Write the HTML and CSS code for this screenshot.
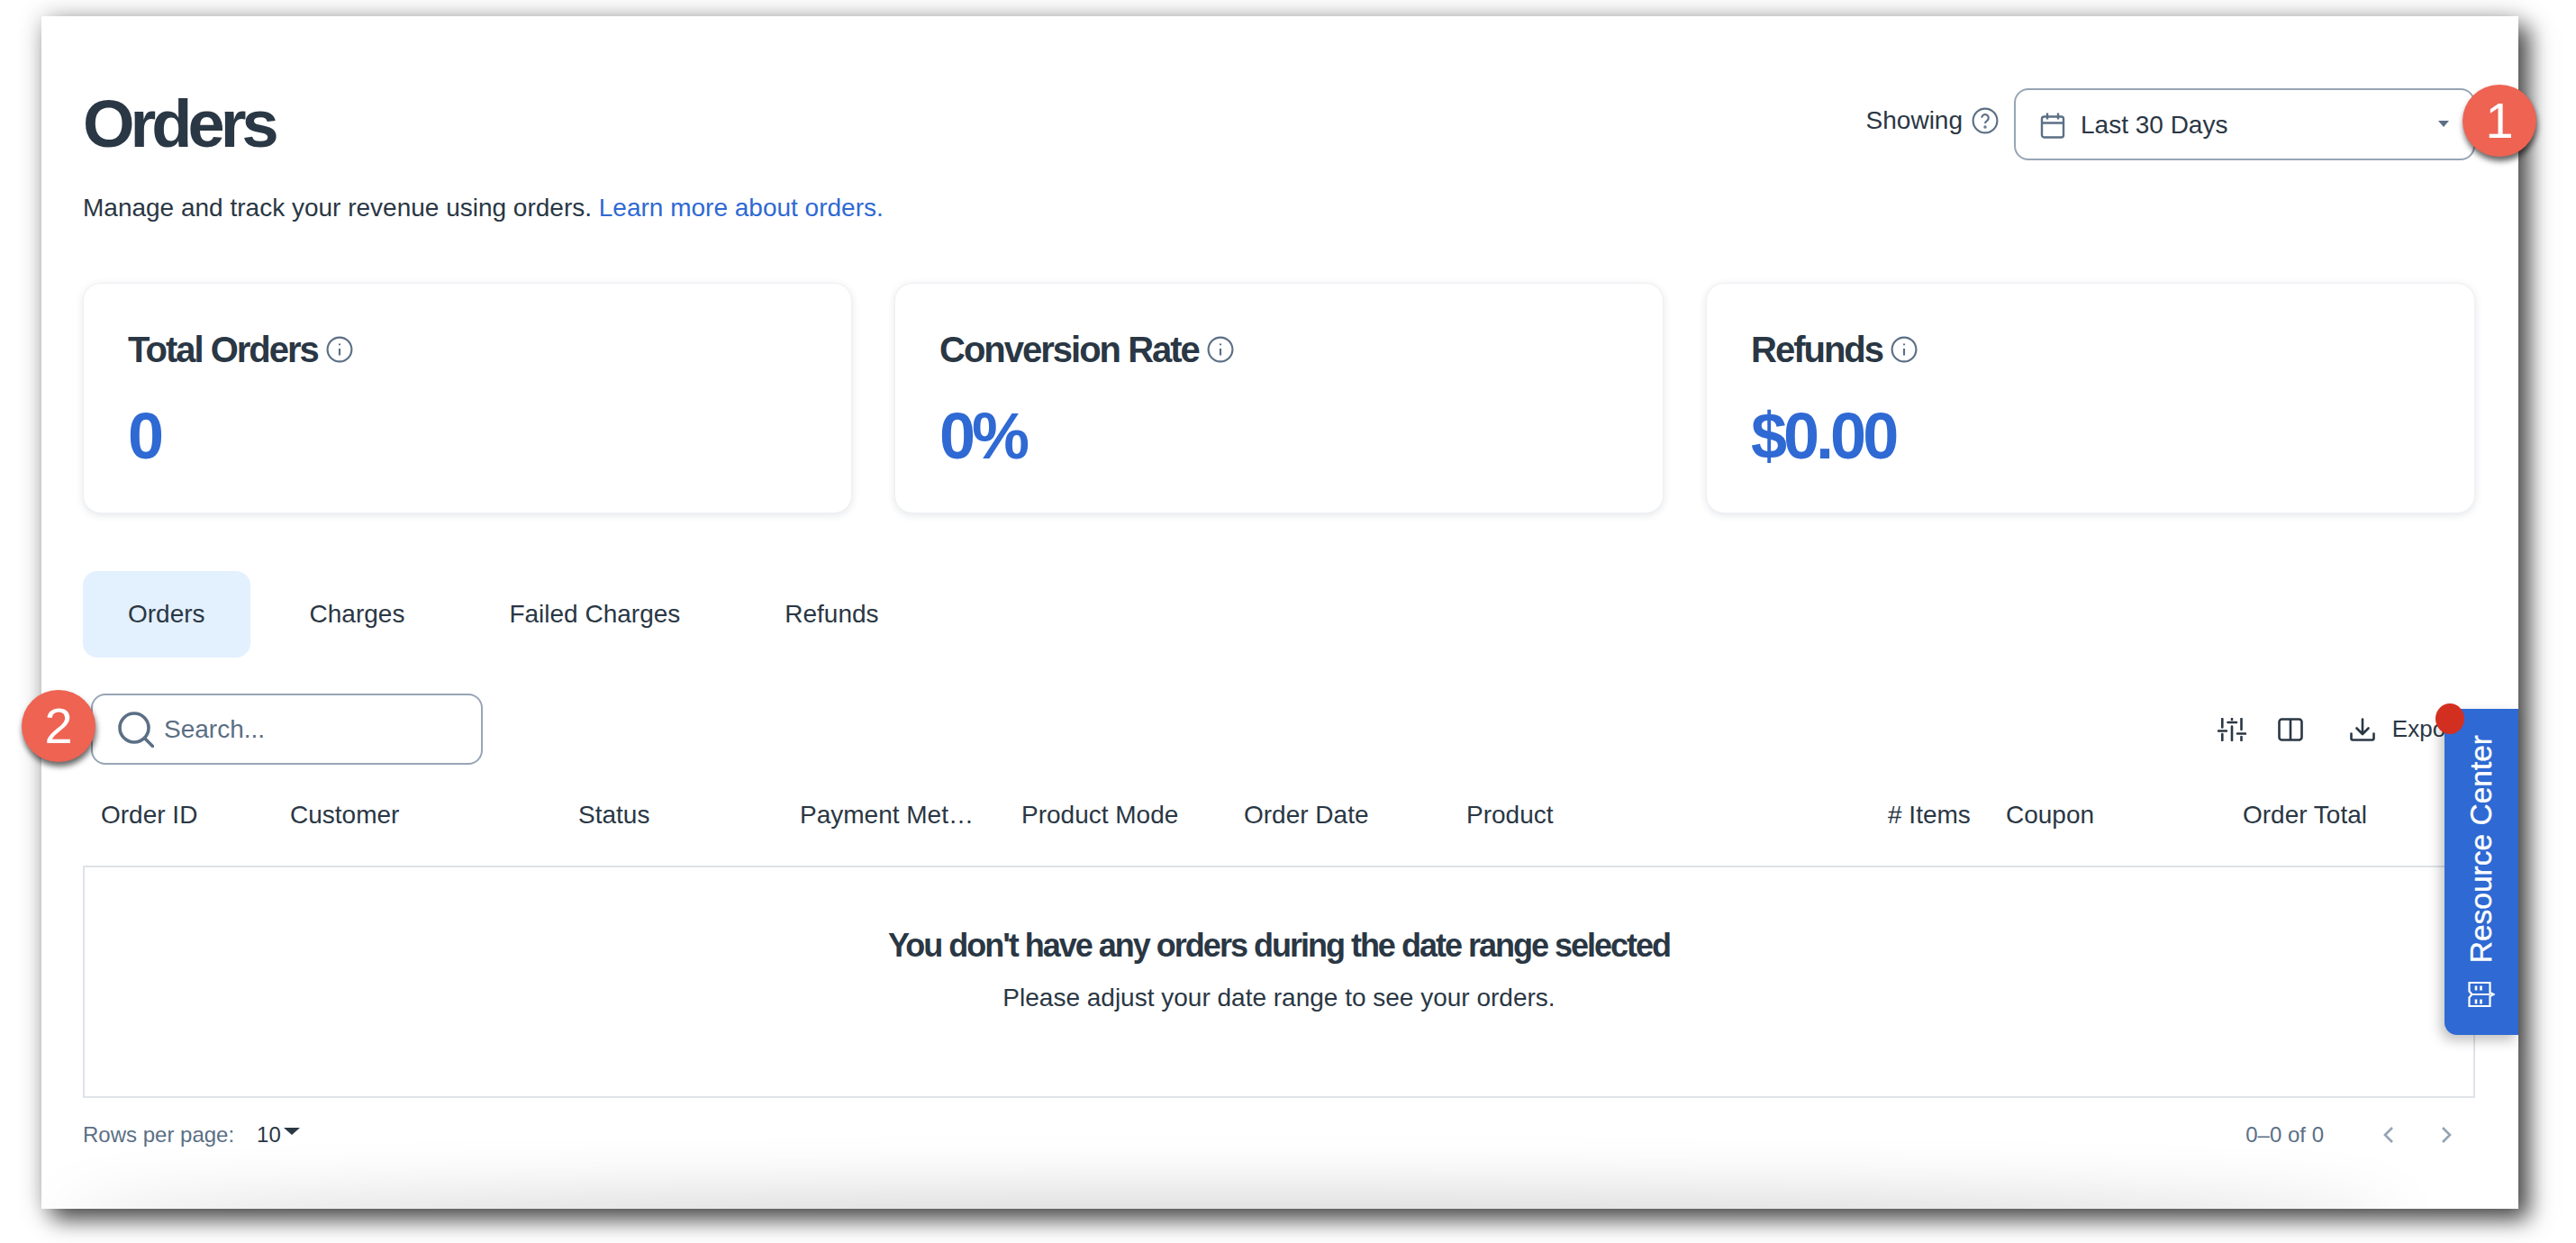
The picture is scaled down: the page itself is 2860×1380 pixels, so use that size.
FILE: index.html
```html
<!DOCTYPE html>
<html lang="en">
<head>
<meta charset="utf-8">
<title>Orders</title>
<link rel="stylesheet" href="styles.css">
</head>
<body>
<main class="window">
  <header class="head">
    <div>
      <h1 class="title">Orders</h1>
      <p class="sub">Manage and track your revenue using orders. <a class="link">Learn more about orders.</a></p>
    </div>
    <div class="range">
      <span class="showing">Showing</span>
      <svg class="help" viewBox="0 0 28 28" fill="none" stroke="#5b6f85" stroke-width="2"><circle cx="14" cy="14" r="12.5"/><path d="M10.5 11a3.5 3.5 0 1 1 5.6 2.8c-1.300 .9-2.100 1.500-2.100 3"/><circle cx="14" cy="20.500" r=".6"/></svg>
      <div class="select">
        <svg class="cal" viewBox="0 0 28 30" fill="none" stroke="#5b6f85" stroke-width="2.400"><rect x="2" y="5" width="24" height="23" rx="2.500"/><path d="M2 12h24M8 1v7M20 1v7"/></svg>
        <span class="select-text">Last 30 Days</span>
        <span class="select-caret"></span>
      </div>
    </div>
  </header>

  <section class="cards">
    <article class="card">
      <h2 class="card-title">Total Orders <svg class="info" viewBox="0 0 28 28" fill="none" stroke="#5b6f85" stroke-width="2"><circle cx="14" cy="14" r="12.500"/><path d="M14 13v7M14 8v1.500"/></svg></h2>
      <div class="card-value">0</div>
    </article>
    <article class="card">
      <h2 class="card-title">Conversion Rate <svg class="info" viewBox="0 0 28 28" fill="none" stroke="#5b6f85" stroke-width="2"><circle cx="14" cy="14" r="12.500"/><path d="M14 13v7M14 8v1.500"/></svg></h2>
      <div class="card-value">0%</div>
    </article>
    <article class="card">
      <h2 class="card-title">Refunds <svg class="info" viewBox="0 0 28 28" fill="none" stroke="#5b6f85" stroke-width="2"><circle cx="14" cy="14" r="12.500"/><path d="M14 13v7M14 8v1.500"/></svg></h2>
      <div class="card-value">$0.00</div>
    </article>
  </section>

  <nav class="tabs">
    <span class="tab tab-active">Orders</span>
    <span class="tab">Charges</span>
    <span class="tab">Failed Charges</span>
    <span class="tab">Refunds</span>
  </nav>

  <div class="toolbar">
    <div class="search">
      <svg class="search-icon" viewBox="0 0 40 40" fill="none" stroke="#5b6f85" stroke-width="3.600"><circle cx="18" cy="18" r="16"/><path d="M29.500 29.500l9 9" stroke-linecap="round"/></svg>
      <span class="search-text">Search...</span>
    </div>
    <div class="actions">
      <svg class="tool" viewBox="0 0 32 26" fill="none" stroke="#2a3744" stroke-width="2.600" stroke-linecap="round"><path d="M5.300 1v9.500M5.300 18v7M16 1v1M16 9.500v15.500M26.500 1v12M26.500 21v4M1 14.500h9M11.500 5h9.500M22 17.500h9"/></svg>
      <svg class="tool tool-col" viewBox="0 0 28 26" fill="none" stroke="#2a3744" stroke-width="2.600"><rect x="1.500" y="1.500" width="25" height="23" rx="3"/><path d="M14 1.500v23"/></svg>
      <svg class="tool tool-dl" viewBox="0 0 28 26" fill="none" stroke="#2a3744" stroke-width="2.600" stroke-linecap="round" stroke-linejoin="round"><path d="M14 1.500v16M7.500 11.500l6.500 6.500 6.500-6.500M1.500 17.500v5.500a1.500 1.500 0 0 0 1.500 1.500h22a1.500 1.500 0 0 0 1.500-1.500v-5.500"/></svg>
      <span class="export">Export</span>
    </div>
  </div>

  <div class="thead">
    <span>Order ID</span>
    <span>Customer</span>
    <span>Status</span>
    <span>Payment Met…</span>
    <span>Product Mode</span>
    <span>Order Date</span>
    <span>Product</span>
    <span># Items</span>
    <span>Coupon</span>
    <span>Order Total</span>
  </div>

  <section class="empty">
    <h3 class="empty-title">You don't have any orders during the date range selected</h3>
    <p class="empty-sub">Please adjust your date range to see your orders.</p>
  </section>

  <footer class="pager">
    <span class="rows">Rows per page:</span>
    <span class="rows-val">10</span>
    <span class="rows-caret"></span>
    <span class="count">0–0 of 0</span>
    <svg class="chev" viewBox="0 0 12 20" fill="none" stroke="#94a3b3" stroke-width="2.600"><path d="M10 2l-8 8 8 8"/></svg>
    <svg class="chev chev-next" viewBox="0 0 12 20" fill="none" stroke="#94a3b3" stroke-width="2.600"><path d="M2 2l8 8-8 8"/></svg>
  </footer>

  <div class="fade"></div>

  <aside class="resource">
    <span class="resource-text">Resource Center</span>
    <svg class="resource-icon" viewBox="0 0 30 30" fill="none" stroke="#fff" stroke-width="2.200"><path d="M1.500 2h23v11l4 2-4 2v11h-23v-9.500l3-3.500-3-3.500zM4.500 15h20"/><path d="M9 5.500v5M14.500 5.500v5M9 20.500v5M14.500 20.500v5" stroke-width="2.600"/></svg>
  </aside>
  <span class="dot"></span>
</main>
<span class="badge badge-one">1</span>
<span class="badge badge-two">2</span>
</body>
</html>
```
FILE: styles.css
```css
* { box-sizing: border-box; }
html, body { margin: 0; padding: 0; }
body {
  width: 2860px;
  height: 1380px;
  overflow: hidden;
  background: #fff;
  padding: 18px 64px 0 46px;
  font-family: "Liberation Sans", Arial, sans-serif;
  font-size: 28px;
  color: #2a3744;
}
.window {
  position: relative;
  width: 2750px;
  height: 1324px;
  padding: 80px 48px 0 46px;
  background: #fff;
  overflow: visible;
  box-shadow: 12px 12px 24px rgba(0,0,0,.68), 0 0 26px rgba(0,0,0,.2);
}
.head { display: flex; justify-content: space-between; align-items: flex-start; }
.title {
  margin: 0;
  font-size: 74px;
  line-height: 80px;
  font-weight: 700;
  letter-spacing: -5px;
}
.sub { margin: 33px 0 0; line-height: 40px; }
.link { color: #2f69d3; }
.range { display: flex; align-items: flex-start; }
.showing { line-height: 40px; margin-top: 16px; }
.help { width: 30px; height: 30px; margin: 21px 17px 0 10px; }
.select {
  display: flex;
  align-items: center;
  width: 512px;
  height: 80px;
  padding: 2px 27px 0;
  border: 2px solid #97a5b5;
  border-radius: 16px;
}
.cal { width: 28px; height: 31px; flex: none; }
.select-text { margin-left: 17px; }
.select-caret {
  margin-left: auto;
  margin-top: -4px;
  border: 6px solid transparent;
  border-top: 7px solid #5b6f85;
  border-bottom: 0;
}
.cards { display: flex; gap: 47px; margin-top: 63px; }
.card {
  flex: 1;
  height: 256px;
  padding: 49px 49px 0;
  background: #fff;
  border: 1px solid #eef0f3;
  border-radius: 20px;
  box-shadow: 0 2px 8px rgba(30,50,70,.12);
}
.card-title {
  margin: 0;
  display: flex;
  align-items: center;
  gap: 10px;
  font-size: 40px;
  line-height: 48px;
  font-weight: 700;
  letter-spacing: -2px;
  white-space: pre;
}
.info { width: 30px; height: 30px; margin-left: -10px; flex: none; }
.card-value {
  margin-top: 32px;
  font-size: 72px;
  line-height: 80px;
  font-weight: 700;
  letter-spacing: -4px;
  color: #2f69d3;
}
.tabs { display: flex; gap: 16px; margin-top: 64px; }
.tab {
  height: 96px;
  padding: 1px 50px 0;
  line-height: 94px;
  border-radius: 16px;
}
.tab-active { background: #e3f0fd; }
.toolbar { display: flex; justify-content: space-between; align-items: center; margin-top: 40px; height: 79px; }
.search {
  display: flex;
  align-items: center;
  width: 435px;
  height: 79px;
  margin-left: 9px;
  padding-left: 28px;
  border: 2px solid #97a5b5;
  border-radius: 16px;
}
.search-icon { width: 40px; height: 40px; flex: none; }
.search-text { margin-left: 11px; color: #5b6f85; }
.actions { display: flex; align-items: center; padding-right: 17px; }
.tool { width: 32px; height: 26px; flex: none; }
.tool-col { width: 28px; margin-left: 35px; }
.tool-dl { width: 28px; margin-left: 52px; }
.export { margin-left: 19px; font-size: 26px; }
.thead {
  display: grid;
  grid-template-columns: 210px 320px 246px 246px 247px 247px 468px 131px 263px 1fr;
  height: 112px;
  padding-left: 20px;
  align-items: center;
  white-space: nowrap;
}
.empty {
  height: 258px;
  padding-top: 63px;
  border: 2px solid #dfe3e8;
  text-align: center;
}
.empty-title {
  margin: 0;
  font-size: 36px;
  line-height: 48px;
  font-weight: 700;
  letter-spacing: -2px;
}
.empty-sub { margin: 14px 0 0; line-height: 40px; }
.pager {
  display: flex;
  align-items: center;
  height: 82px;
  font-size: 24px;
}
.rows { color: #5b6f85; }
.rows-val { margin-left: 25px; }
.rows-caret {
  margin: -8px 0 0 3px;
  border: 9px solid transparent;
  border-top: 8px solid #2a3744;
  border-bottom: 0;
}
.count { margin-left: auto; color: #5b6f85; }
.chev { width: 12px; height: 20px; margin-left: 66px; flex: none; }
.chev-next { margin-left: 52px; margin-right: 26px; }
.fade {
  position: absolute;
  left: 0;
  right: 0;
  bottom: 0;
  height: 90px;
  overflow: hidden;
  pointer-events: none;
}
.fade::after {
  content: "";
  position: absolute;
  left: 30px;
  right: 140px;
  bottom: -30px;
  height: 30px;
  border-radius: 50%;
  box-shadow: 0 0 70px 10px rgba(0,0,0,.22);
}
.resource {
  position: absolute;
  right: 0;
  top: 769px;
  width: 82px;
  height: 362px;
  display: flex;
  flex-direction: column;
  align-items: center;
  padding-top: 29px;
  background: #2f69d3;
  border-radius: 6px 0 0 14px;
  box-shadow: -4px 6px 14px rgba(0,0,0,.25);
  color: #fff;
}
.resource-text {
  writing-mode: vertical-rl;
  transform: rotate(180deg);
  font-size: 33.500px;
  line-height: 36px;
  -webkit-text-stroke: .4px #fff;
}
.resource-icon { width: 30px; height: 30px; margin-top: 20px; flex: none; }
.dot {
  position: absolute;
  left: 2658px;
  top: 763px;
  width: 32px;
  height: 34px;
  border-radius: 50%;
  background: #d32f20;
}
.badge {
  position: absolute;
  width: 82px;
  height: 80px;
  border-radius: 50%;
  background: #ee6352;
  color: #fff;
  font-size: 56px;
  line-height: 80px;
  text-align: center;
  box-shadow: 1px 5px 6px rgba(0,0,0,.6);
}
.badge-one { left: 2734px; top: 94px; }
.badge-two { left: 24px; top: 766px; }
```
